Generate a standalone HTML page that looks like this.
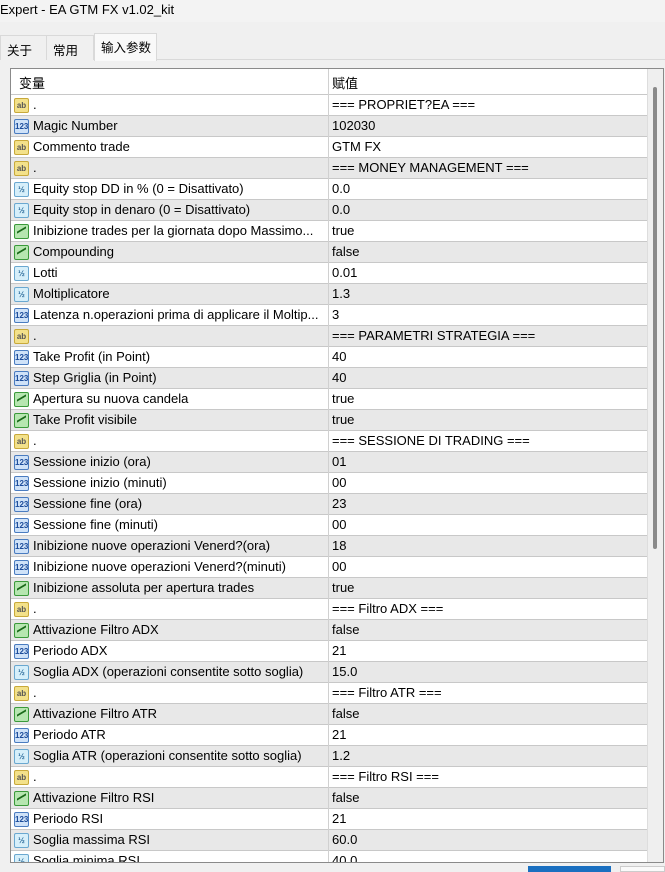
<!DOCTYPE html>
<html><head><meta charset="utf-8"><style>
*{margin:0;padding:0;box-sizing:border-box}
body{width:665px;height:870px;overflow:hidden;background:#f0f0f0;font-family:"Liberation Sans","Noto Sans CJK SC",sans-serif;font-size:13px;color:#000;position:relative}
.title{position:absolute;left:0;top:0;height:22px;width:665px;background:#f3f3f3;padding:2px 0 0 0;font-size:13px}
.tabs{position:absolute;top:35px;left:0;height:25px;width:665px;border-bottom:1px solid #d9d9d9}
.tab{position:absolute;top:0;height:25px;padding:4px 6px;border:1px solid #d9d9d9;border-bottom:none;background:#f0f0f0;white-space:nowrap;font-size:12.5px}
.tab.act{background:#f9f9f9;top:-2px;height:28px;padding-top:3px}
.box{position:absolute;left:10px;top:68px;width:654px;height:795px;border:1px solid #8a8a8a;background:#fff;overflow:hidden}
.hdr{position:absolute;top:0;left:0;width:636px;height:25px;background:#fff}
.hdr span{position:absolute;top:4px}
.row{position:absolute;left:0;width:636px;height:21px;border-top:1px solid #c8c8c8;background:#fff}
.row.g{background:#e8e8e8}
.row .n{position:absolute;left:22px;top:2px;white-space:nowrap;width:292px;overflow:hidden}
.row .v{position:absolute;left:321px;top:2px}
.ic{position:absolute;left:3px;top:3px;width:15px;height:15px;border-radius:2px;font-size:8px;line-height:14px;text-align:center;font-weight:bold}
.a{background:#f3e18a;border:1px solid #c8a93a;color:#555}
.nn{background:#cfe2f8;border:1px solid #4a7cc0;color:#1b4b9a}
.h{background:#d6effa;border:1px solid #6aa8d0;color:#2b6a9a}
.b{background:#b6e6b0 url("") no-repeat;border:1px solid #3a9a3a}
.b::after{content:"";position:absolute;left:2px;top:4px;width:9px;height:5px;border-top:2px solid #1a6a1a;transform:skewY(-30deg)}
.col{position:absolute;left:317px;top:0;width:1px;height:795px;background:#d0d0d0}
.sb{position:absolute;left:636px;top:0;width:17px;height:795px;background:#efefef;border-left:1px solid #ddd}
.th{position:absolute;left:5px;top:18px;width:4px;height:462px;background:#8a8a8a;border-radius:2px}
</style></head><body>
<div class="title">Expert - EA GTM FX v1.02_kit</div>
<div class="tabs">
<div class="tab" style="left:0;width:47px">关于</div>
<div class="tab" style="left:46px;width:48px">常用</div>
<div class="tab act" style="left:94px;width:63px">输入参数</div>
</div>
<div class="box">
<div class="hdr"><span style="left:8px">变量</span><span style="left:321px">赋值</span></div>
<div class="row" style="top:25px"><div class="ic a">ab</div><span class="n">.</span><span class="v">=== PROPRIET?EA ===</span></div>
<div class="row g" style="top:46px"><div class="ic nn">123</div><span class="n">Magic Number</span><span class="v">102030</span></div>
<div class="row" style="top:67px"><div class="ic a">ab</div><span class="n">Commento trade</span><span class="v">GTM FX</span></div>
<div class="row g" style="top:88px"><div class="ic a">ab</div><span class="n">.</span><span class="v">=== MONEY MANAGEMENT ===</span></div>
<div class="row" style="top:109px"><div class="ic h">½</div><span class="n">Equity stop DD in % (0 = Disattivato)</span><span class="v">0.0</span></div>
<div class="row g" style="top:130px"><div class="ic h">½</div><span class="n">Equity stop in denaro (0 = Disattivato)</span><span class="v">0.0</span></div>
<div class="row" style="top:151px"><div class="ic b"></div><span class="n">Inibizione trades per la giornata dopo Massimo...</span><span class="v">true</span></div>
<div class="row g" style="top:172px"><div class="ic b"></div><span class="n">Compounding</span><span class="v">false</span></div>
<div class="row" style="top:193px"><div class="ic h">½</div><span class="n">Lotti</span><span class="v">0.01</span></div>
<div class="row g" style="top:214px"><div class="ic h">½</div><span class="n">Moltiplicatore</span><span class="v">1.3</span></div>
<div class="row" style="top:235px"><div class="ic nn">123</div><span class="n">Latenza n.operazioni prima di applicare il Moltip...</span><span class="v">3</span></div>
<div class="row g" style="top:256px"><div class="ic a">ab</div><span class="n">.</span><span class="v">=== PARAMETRI STRATEGIA ===</span></div>
<div class="row" style="top:277px"><div class="ic nn">123</div><span class="n">Take Profit (in Point)</span><span class="v">40</span></div>
<div class="row g" style="top:298px"><div class="ic nn">123</div><span class="n">Step Griglia (in Point)</span><span class="v">40</span></div>
<div class="row" style="top:319px"><div class="ic b"></div><span class="n">Apertura su nuova candela</span><span class="v">true</span></div>
<div class="row g" style="top:340px"><div class="ic b"></div><span class="n">Take Profit visibile</span><span class="v">true</span></div>
<div class="row" style="top:361px"><div class="ic a">ab</div><span class="n">.</span><span class="v">=== SESSIONE DI TRADING ===</span></div>
<div class="row g" style="top:382px"><div class="ic nn">123</div><span class="n">Sessione inizio (ora)</span><span class="v">01</span></div>
<div class="row" style="top:403px"><div class="ic nn">123</div><span class="n">Sessione inizio (minuti)</span><span class="v">00</span></div>
<div class="row g" style="top:424px"><div class="ic nn">123</div><span class="n">Sessione fine (ora)</span><span class="v">23</span></div>
<div class="row" style="top:445px"><div class="ic nn">123</div><span class="n">Sessione fine (minuti)</span><span class="v">00</span></div>
<div class="row g" style="top:466px"><div class="ic nn">123</div><span class="n">Inibizione nuove operazioni Venerd?(ora)</span><span class="v">18</span></div>
<div class="row" style="top:487px"><div class="ic nn">123</div><span class="n">Inibizione nuove operazioni Venerd?(minuti)</span><span class="v">00</span></div>
<div class="row g" style="top:508px"><div class="ic b"></div><span class="n">Inibizione assoluta per apertura trades</span><span class="v">true</span></div>
<div class="row" style="top:529px"><div class="ic a">ab</div><span class="n">.</span><span class="v">=== Filtro ADX ===</span></div>
<div class="row g" style="top:550px"><div class="ic b"></div><span class="n">Attivazione Filtro ADX</span><span class="v">false</span></div>
<div class="row" style="top:571px"><div class="ic nn">123</div><span class="n">Periodo ADX</span><span class="v">21</span></div>
<div class="row g" style="top:592px"><div class="ic h">½</div><span class="n">Soglia ADX (operazioni consentite sotto soglia)</span><span class="v">15.0</span></div>
<div class="row" style="top:613px"><div class="ic a">ab</div><span class="n">.</span><span class="v">=== Filtro ATR ===</span></div>
<div class="row g" style="top:634px"><div class="ic b"></div><span class="n">Attivazione Filtro ATR</span><span class="v">false</span></div>
<div class="row" style="top:655px"><div class="ic nn">123</div><span class="n">Periodo ATR</span><span class="v">21</span></div>
<div class="row g" style="top:676px"><div class="ic h">½</div><span class="n">Soglia ATR (operazioni consentite sotto soglia)</span><span class="v">1.2</span></div>
<div class="row" style="top:697px"><div class="ic a">ab</div><span class="n">.</span><span class="v">=== Filtro RSI ===</span></div>
<div class="row g" style="top:718px"><div class="ic b"></div><span class="n">Attivazione Filtro RSI</span><span class="v">false</span></div>
<div class="row" style="top:739px"><div class="ic nn">123</div><span class="n">Periodo RSI</span><span class="v">21</span></div>
<div class="row g" style="top:760px"><div class="ic h">½</div><span class="n">Soglia massima RSI</span><span class="v">60.0</span></div>
<div class="row" style="top:781px"><div class="ic h">½</div><span class="n">Soglia minima RSI</span><span class="v">40.0</span></div>
<div class="col"></div>
<div class="sb"><div class="th"></div></div>
</div>
<div style="position:absolute;left:528px;top:866px;width:83px;height:6px;background:#1a6fc0"></div>
<div style="position:absolute;left:620px;top:866px;width:45px;height:6px;background:#fafafa;border:1px solid #ccc"></div>
</body></html>
